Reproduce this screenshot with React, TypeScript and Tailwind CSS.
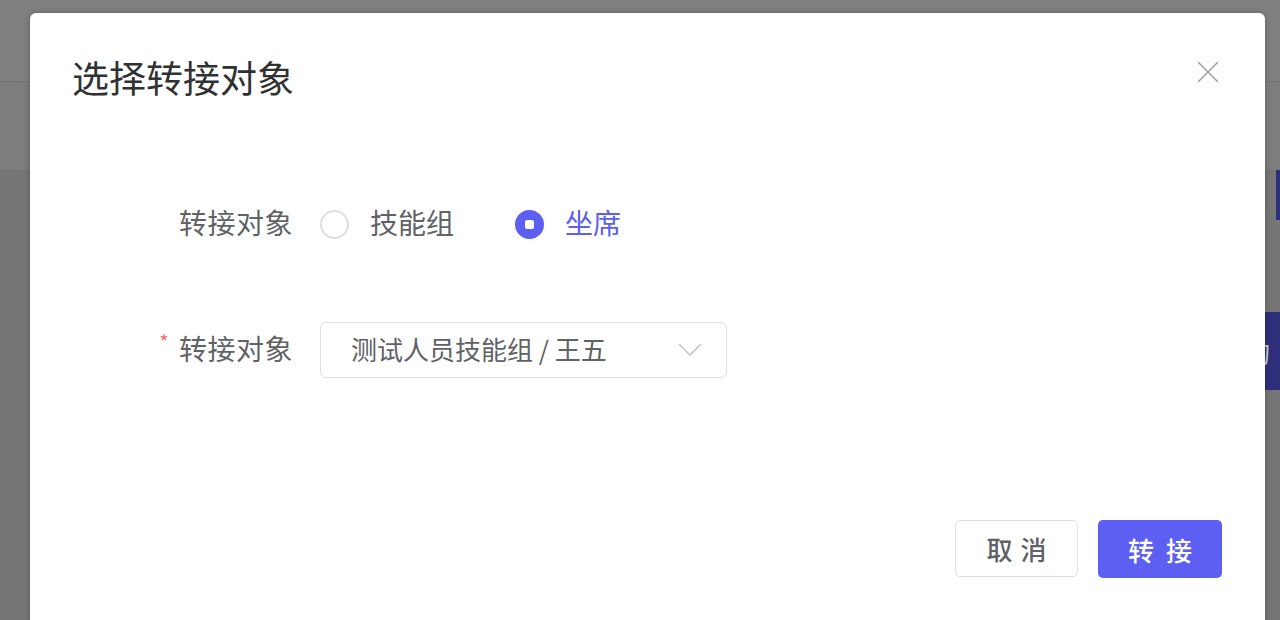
import { X } from "lucide-react"

const font = { fontFamily: '"Noto Sans CJK SC", "Noto Sans", sans-serif' }

function Radio({ label, checked }: { label: string; checked?: boolean }) {
  return (
    <label className="flex items-center gap-[21px] cursor-pointer">
      {checked ? (
        <span className="w-[29px] h-[29px] rounded-full bg-[#5d5ff2] flex items-center justify-center">
          <span className="w-[9px] h-[9px] rounded-[2px] bg-white" />
        </span>
      ) : (
        <span className="w-[29px] h-[29px] rounded-full border-2 border-[#dcdfe6] bg-white" />
      )}
      <span className={checked ? "text-[28px] pb-[4px] text-[#5d5ff2]" : "text-[28px] pb-[4px] text-[#606266]"}>
        {label}
      </span>
    </label>
  )
}

export default function App() {
  return (
    <div className="relative w-[1280px] h-[620px] overflow-hidden bg-[#767676]" style={font}>
      {/* dimmed page behind the dialog */}
      <div className="h-[82px] bg-[#808080] border-b border-[#737373]" />
      <div className="h-[88px] bg-[#7d7d7d]" />
      <div className="flex flex-col items-end gap-[92px]">
        <div className="w-[4px] h-[50px] bg-[#2e2f7a]" />
        <div className="w-[40px] h-[78px] bg-[#2e2f7a] flex items-center pl-[4px] text-[26px] text-[#c9c9dd]">询</div>
      </div>

      {/* dialog */}
      <div className="absolute left-[30px] top-[13px] w-[1235px] h-[640px] bg-white rounded-[6px] shadow-[0_0_6px_rgba(0,0,0,0.25)] flex flex-col">
        <div className="flex items-start justify-between pl-[42px] pr-[38px] pt-[46px]">
          <h1 className="text-[37px] leading-[36px] text-[#303133] font-normal">选择转接对象</h1>
          <button className="mt-[-6px] text-[#a0a3aa]">
            <X size={38} strokeWidth={1} />
          </button>
        </div>

        <div className="ml-[120px] mt-[101px] flex flex-col gap-[70px]">
          <div className="flex items-center h-[56px]">
            <div className="w-[170px] pr-[27px] pb-[4px] text-right text-[28px] tracking-[0.5px] text-[#606266]">转接对象</div>
            <div className="flex items-center gap-[61px]">
              <Radio label="技能组" />
              <Radio label="坐席" checked />
            </div>
          </div>
          <div className="flex items-center h-[56px]">
            <div className="w-[170px] pr-[27px] pb-[4px] text-right text-[28px] tracking-[0.5px] text-[#606266]">
              <span className="text-[#f56c6c] text-[20px] mr-[10px] align-top">*</span>转接对象
            </div>
            <div className="w-[407px] h-[56px] border border-[#dcdfe6] rounded-[6px] flex items-center justify-between pl-[30px] pr-[24px]">
              <span className="text-[26px] pb-[3px] text-[#606266]">测试人员技能组 / 王五</span>
              <svg width="24" height="14" viewBox="0 0 24 14" fill="none" stroke="#c0c4cc" strokeWidth="1.6" strokeLinecap="round" strokeLinejoin="round">
                <polyline points="1.5 1.5 12 12 22.5 1.5" />
              </svg>
            </div>
          </div>
        </div>

        <div className="mt-[142px] flex justify-end gap-[20px] pr-[43px]">
          <button className="w-[123px] h-[57px] border border-[#dcdfe6] rounded-[5px] bg-white text-[26px] font-medium text-[#606266] tracking-[8px] pl-[8px]">
            取消
          </button>
          <button className="w-[124px] h-[58px] rounded-[5px] bg-[#5d5ff2] text-[26px] font-medium text-white tracking-[12px] pl-[12px]">
            转接
          </button>
        </div>
      </div>
    </div>
  )
}
